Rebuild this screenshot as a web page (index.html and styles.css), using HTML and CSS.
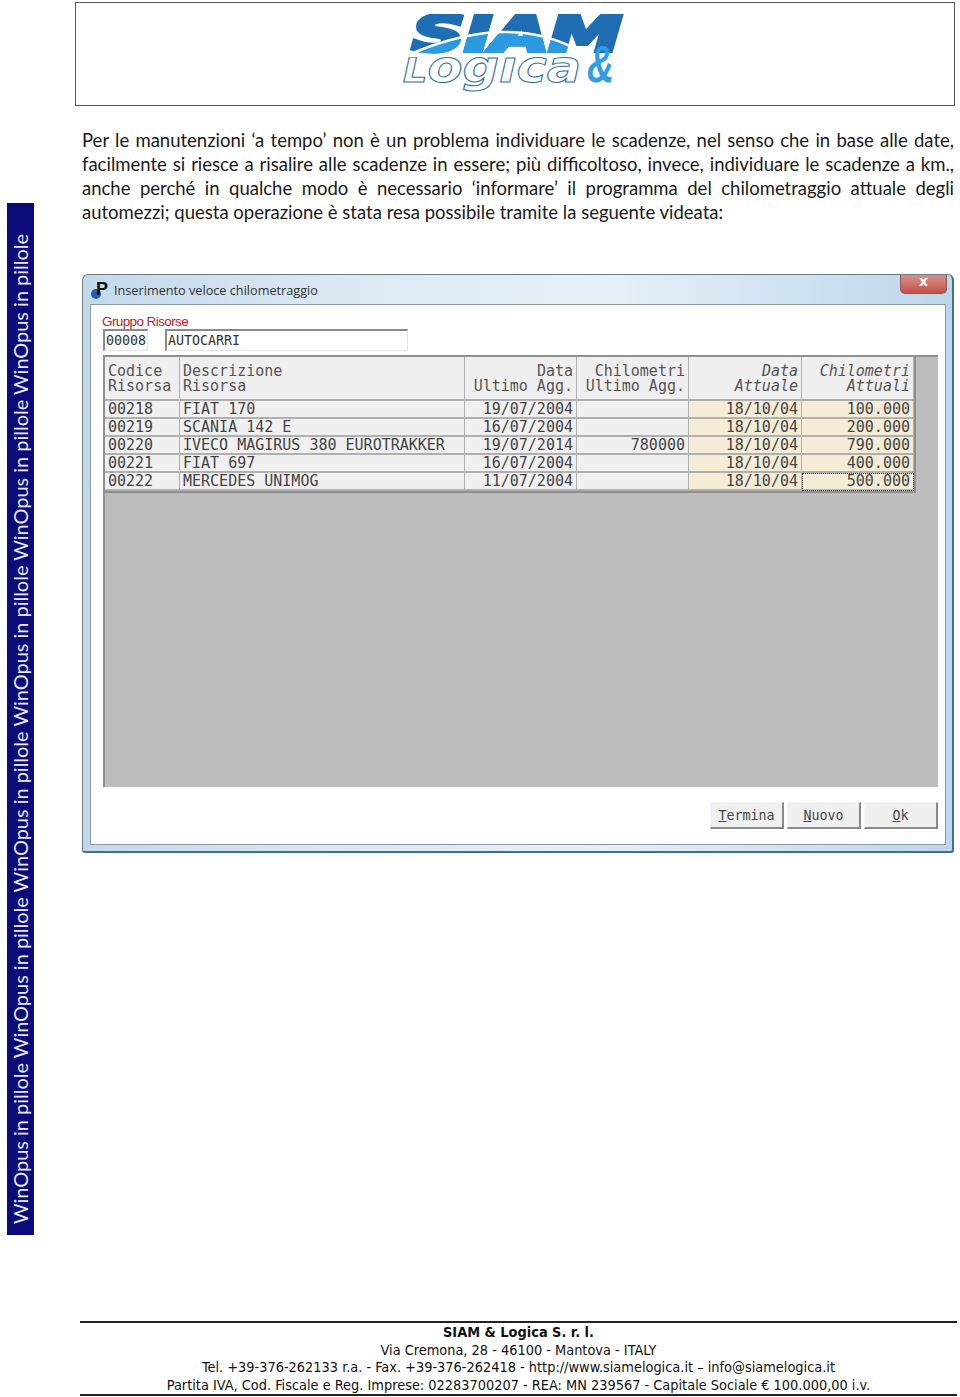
FILE: index.html
```html
<!DOCTYPE html>
<html lang="it">
<head>
<meta charset="utf-8">
<title>WinOpus in pillole</title>
<link rel="stylesheet" href="styles.css">
</head>
<body>
<div class="layout">
  <aside class="sidebar"><span class="sidebar-text">WinOpus in pillole WinOpus in pillole WinOpus in pillole WinOpus in pillole WinOpus in pillole WinOpus in pillole</span></aside>
  <main class="main">
    <header class="logo-box">
      <svg class="logo" viewBox="0 0 224 80" width="224" height="80" role="img" aria-label="SIAM &amp; Logica">
        <defs>
          <clipPath id="dome"><path d="M0 42 L10 39 Q110 -3 180 39 L190 42 Z"/></clipPath>
          <clipPath id="below"><rect x="0" y="43" width="224" height="37"/></clipPath>
        </defs>
        <text class="logo-siam" x="9" y="37" textLength="210" lengthAdjust="spacingAndGlyphs">SIAM</text>
        <g clip-path="url(#dome)"><text class="logo-siam logo-siam-light" x="9" y="37" textLength="210" lengthAdjust="spacingAndGlyphs">SIAM</text></g>
        <path class="logo-arc" d="M10 39 Q110 -3 180 39"/>
        <g clip-path="url(#below)"><text class="logo-logica" transform="translate(0 68) scale(1.16 1)"><tspan class="logo-cap">L</tspan><tspan>ogica</tspan></text></g>
        <text class="logo-amp" transform="translate(184 68) scale(.72 1)">&amp;</text>
      </svg>
    </header>
    <p class="intro">Per le manutenzioni ‘a tempo’ non è un problema individuare le scadenze, nel senso che in base alle date, facilmente si riesce a risalire alle scadenze in essere; più difficoltoso, invece, individuare le scadenze a km., anche perché in qualche modo è necessario ‘informare’ il programma del chilometraggio attuale degli automezzi; questa operazione è stata resa possibile tramite la seguente videata:</p>
    <section class="window">
      <div class="titlebar">
        <span class="app-icon"><span class="app-dot"></span><span class="app-p">P</span></span>
        <span class="title">Inserimento veloce chilometraggio</span>
        <span class="close">x</span>
      </div>
      <div class="panel">
        <div class="group-label">Gruppo Risorse</div>
        <div class="fields">
          <div class="field field-code">00008</div>
          <div class="field field-name">AUTOCARRI</div>
        </div>
        <div class="table-area">
          <div class="grid">
            <div class="cell head">Codice<br>Risorsa</div>
            <div class="cell head">Descrizione<br>Risorsa</div>
            <div class="cell head right">Data<br>Ultimo Agg.</div>
            <div class="cell head right">Chilometri<br>Ultimo Agg.</div>
            <div class="cell head right em">Data<br>Attuale</div>
            <div class="cell head right em">Chilometri<br>Attuali</div>

            <div class="cell">00218</div><div class="cell">FIAT 170</div><div class="cell right">19/07/2004</div><div class="cell right"></div><div class="cell right edit">18/10/04</div><div class="cell right edit">100.000</div>
            <div class="cell">00219</div><div class="cell">SCANIA 142 E</div><div class="cell right">16/07/2004</div><div class="cell right"></div><div class="cell right edit">18/10/04</div><div class="cell right edit">200.000</div>
            <div class="cell">00220</div><div class="cell">IVECO MAGIRUS 380 EUROTRAKKER</div><div class="cell right">19/07/2014</div><div class="cell right">780000</div><div class="cell right edit">18/10/04</div><div class="cell right edit">790.000</div>
            <div class="cell">00221</div><div class="cell">FIAT 697</div><div class="cell right">16/07/2004</div><div class="cell right"></div><div class="cell right edit">18/10/04</div><div class="cell right edit">400.000</div>
            <div class="cell">00222</div><div class="cell">MERCEDES UNIMOG</div><div class="cell right">11/07/2004</div><div class="cell right"></div><div class="cell right edit">18/10/04</div><div class="cell right edit focus">500.000</div>
          </div>
        </div>
        <div class="buttons">
          <button class="btn"><u>T</u>ermina</button>
          <button class="btn"><u>N</u>uovo</button>
          <button class="btn"><u>O</u>k</button>
        </div>
      </div>
    </section>
  </main>
</div>
<footer class="footer">
  <div class="footer-name">SIAM &amp; Logica S. r. l.</div>
  <div>Via Cremona, 28 - 46100 - Mantova - ITALY</div>
  <div>Tel. +39-376-262133 r.a. - Fax. +39-376-262418 - http://www.siamelogica.it – info@siamelogica.it</div>
  <div>Partita IVA, Cod. Fiscale e Reg. Imprese: 02283700207 - REA: MN 239567 - Capitale Sociale € 100.000,00 i.v.</div>
</footer>
</body>
</html>
```
FILE: styles.css
```css
html, body { margin: 0; padding: 0; background: #fff; }
body { width: 960px; height: 1397px; overflow: hidden; font-family: "Lato", sans-serif; color: #1a1a1a; }

.layout { display: flex; align-items: flex-start; height: 1321px; }

.sidebar {
  flex: none; width: 27px; height: 1032px; margin: 203px 0 0 7px;
  background: #0a0a78; overflow: hidden; display: flex; justify-content: center;
}
.sidebar-text {
  writing-mode: vertical-rl; transform: rotate(180deg);
  color: #e8e8f4; font: 19.95px/27px "Lato", sans-serif; white-space: nowrap;
  height: 1021px; text-align: left;
}

.main { flex: none; width: 880px; margin: 2px 0 0 41px; }

.logo-box {
  box-sizing: border-box; height: 104px; border: 1px solid #555;
  display: flex; align-items: center; justify-content: center;
}
.logo { display: block; }
.logo-siam { font: italic 700 50px "DejaVu Sans", sans-serif; fill: #1f6db3; stroke: #1f6db3; stroke-width: 4px; }
.logo-siam-light { fill: #2b9ae0; stroke: #2b9ae0; }
.logo-arc { fill: none; stroke: #fff; stroke-width: 2.5px; }
.logo-logica { font: italic 700 44px "DejaVu Sans", sans-serif; fill: #fff; stroke: #2f6fa6; stroke-width: 1px; }
.logo-cap { font-size: 33px; }
.logo-amp { font: italic 700 52px "Liberation Sans", sans-serif; fill: #2f9fe3; }

.intro {
  margin: 22px 0 0 7px; width: 872px;
  font-size: 18.5px; line-height: 24px; text-align: justify;
}

.window {
  box-sizing: border-box; margin: 50px 0 0 7px; width: 872px; height: 579px;
  border: 1px solid #6d7b86; border-bottom: 2px solid #3f6f8e; border-right: 2px solid #3f6f8e;
  border-radius: 6px 6px 3px 3px;
  background: linear-gradient(90deg, #c3d9ea 0%, #dbe9f4 30%, #e6f0f8 60%, #bcd7ea 100%);
  padding: 0 6px 7px 7px;
  display: flex; flex-direction: column;
}
.titlebar { flex: none; height: 29px; display: flex; align-items: center; position: relative; }
.app-icon { width: 18px; height: 18px; position: relative; margin: 1px 5px 0 1px; flex: none; }
.app-dot { position: absolute; left: 0; bottom: 0; width: 10px; height: 10px; border-radius: 50%; background: #1f5cb8; }
.app-p { position: absolute; left: 5px; top: -2px; font: 700 18px/20px "Liberation Sans", sans-serif; color: #111; }
.title { font: 12.7px "Open Sans", sans-serif; color: #333; }
.close {
  position: absolute; right: -1px; top: 0; width: 47px; height: 19px; box-sizing: border-box;
  background: linear-gradient(#d9908a, #c0524a); border: 1px solid #8d5a55; border-top: 0; border-radius: 0 0 5px 5px;
  color: #fff; text-align: center; font: 700 14px/13px "DejaVu Sans", sans-serif;
}

.panel {
  flex: 1; box-sizing: border-box; background: #fff; border: 1px solid #8b9aa5;
  padding: 9px 7px 15px 11px; display: flex; flex-direction: column;
}
.group-label { font: 13.5px/16px "Liberation Sans", sans-serif; color: #b4232b; height: 15px; letter-spacing: -.6px; }
.fields { display: flex; gap: 17px; height: 22px; margin-left: 1px; }
.field {
  box-sizing: border-box; background: #fff; border: 1px solid #e4e4e4; border-top: 2px solid #8a8a8a; border-left: 2px solid #8a8a8a;
  font: 13.3px/19px "DejaVu Sans Mono", monospace; color: #333; padding-left: 1px;
}
.field-code { width: 45px; }
.field-name { width: 243px; }

.table-area {
  box-sizing: border-box; margin: 4px 0 0 1px; width: 835px; height: 432px;
  background: #bdbdbd; border-top: 2px solid #8f8f8f; border-left: 2px solid #8f8f8f;
}
.grid {
  display: grid; width: 809px;
  grid-template-columns: 75px 285px 112px 112px 113px 112px;
  grid-template-rows: 44px repeat(5, 18px);
  font: 15px/15px "DejaVu Sans Mono", monospace; color: #444;
  border-right: 2px solid #8f8f8f; border-bottom: 2px solid #8f8f8f;
}
.cell {
  box-sizing: border-box; background: #f0f0f0; padding: 0 3px;
  border-right: 1px solid #b0b0b0; border-bottom: 2px solid #b0b0b0;
  line-height: 16px; white-space: nowrap; overflow: hidden;
}
.head { line-height: 15px; padding-top: 7px; background: #efefef; color: #555; }
.right { text-align: right; }
.em { font-style: italic; }
.edit { background: #f5ecd6; }
.focus { outline: 1px dotted #222; outline-offset: -1px; }

.buttons { display: flex; justify-content: flex-end; gap: 3px; margin-top: 15px; }
.btn {
  box-sizing: border-box; width: 74px; height: 27px; padding: 0;
  background: #f0f0f0; border: 1px solid #f6f6f6; border-right: 2px solid #8a8a8a; border-bottom: 2px solid #8a8a8a;
  font: 13.3px "DejaVu Sans Mono", monospace; color: #444;
}

.footer {
  box-sizing: border-box; margin-left: 80px; width: 877px; height: 75px; padding-top: 1px;
  border-top: 2px solid #222; border-bottom: 2px solid #222;
  font: 14.4px/17.7px "DejaVu Sans Condensed", "DejaVu Sans", sans-serif; color: #111; text-align: center;
  white-space: nowrap;
}
.footer-name { font-weight: 700; }
```
